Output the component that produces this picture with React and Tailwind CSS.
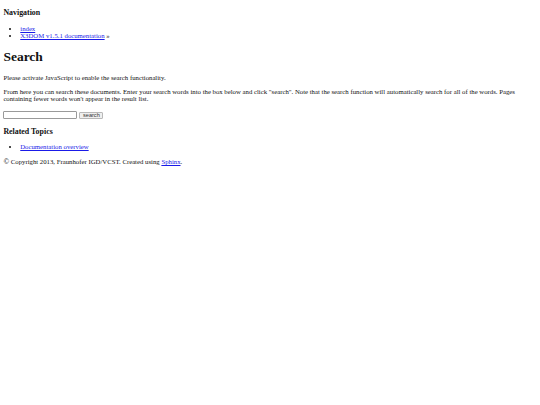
import React from "react";

// Plain Sphinx search page (no theme CSS), shown scaled down to 540px wide
const serif = "font-['Liberation_Serif',serif]";
const link = "text-[#1a1ae8] underline";

export default function App() {
  return (
    <div className={`${serif} text-[6.75px] leading-[normal] text-[#111] px-[3.375px] pb-[3.375px]`}>
      <div>
        <h3 className="text-[7.9px] font-bold my-[7.9px]">Navigation</h3>
        <ul className="list-disc pl-[16.875px] my-[6.75px]">
          <li>
            <a href="#" className={link}>index</a>
          </li>
          <li>
            <a href="#" className={link}>X3DOM v1.5.1 documentation</a> »
          </li>
        </ul>
      </div>

      <div>
        <h1 className="text-[13.5px] font-bold mt-[10px] mb-[9.05px]">Search</h1>
        <p className="my-[6.75px]">Please activate JavaScript to enable the search functionality.</p>
        <p className="my-[6.75px]">
          From here you can search these documents. Enter your search words into the box below and click "search". Note that the search function will automatically search for all of the words. Pages containing fewer words won't appear in the result list.
        </p>
        <form className="flex items-center gap-[2px] pt-[3px] font-['Liberation_Sans',sans-serif] text-[5.6px]">
          <input
            type="text"
            className="w-[74px] h-[7.5px] border border-[#9a9a9a] rounded-[1px] bg-white"
          />
          <button
            type="button"
            className="w-[24px] h-[7px] border border-[#b8b8b8] rounded-[1px] bg-[#efefef] leading-none text-[#333]"
          >
            search
          </button>
        </form>
      </div>

      <div>
        <h3 className="text-[7.9px] font-bold mt-[7.9px] mb-[6.9px]">Related Topics</h3>
        <ul className="list-disc pl-[16.875px] my-[6.75px]">
          <li>
            <a href="#" className={link}>Documentation overview</a>
          </li>
        </ul>
      </div>

      <div className="pt-[2px]">
        <span className="text-[7.5px] leading-none">©</span> Copyright 2013, Fraunhofer IGD/VCST. Created using{" "}
        <a href="#" className={link}>Sphinx</a>.
      </div>
    </div>
  );
}
